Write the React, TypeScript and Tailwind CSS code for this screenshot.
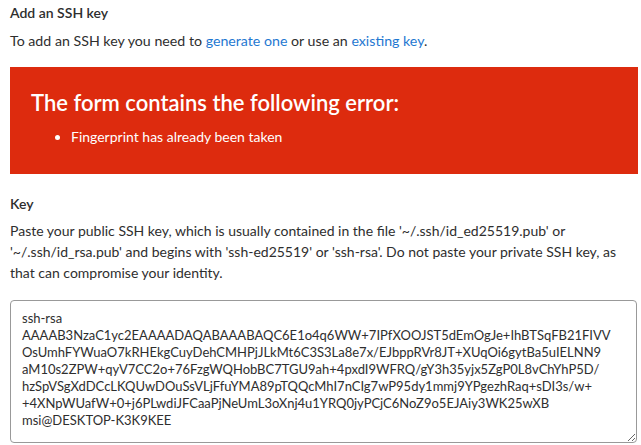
import React from 'react'

const keyText = [
  'ssh-rsa',
  'AAAAB3NzaC1yc2EAAAADAQABAAABAQC6E1o4q6WW+7IPfXOOJST5dEmOgJe+IhBTSqFB21FIVV',
  'OsUmhFYWuaO7kRHEkgCuyDehCMHPjJLkMt6C3S3La8e7x/EJbppRVr8JT+XUqOi6gytBa5uIELNN9',
  'aM10s2ZPW+qyV7CC2o+76FzgWQHobBC7TGU9ah+4pxdI9WFRQ/gY3h35yjx5ZgP0L8vChYhP5D/',
  'hzSpVSgXdDCcLKQUwDOuSsVLjFfuYMA89pTQQcMhI7nCIg7wP95dy1mmj9YPgezhRaq+sDI3s/w+',
  '+4XNpWUafW+0+j6PLwdiJFCaaPjNeUmL3oXnj4u1YRQ0jyPCjC6NoZ9o5EJAiy3WK25wXB',
  'msi@DESKTOP-K3K9KEE',
].join('\n')

const App: React.FC = () => {
  return (
    <div className="w-[641px] h-[445px] overflow-hidden bg-white text-[#2e2e2e] font-['Lato',sans-serif] px-[10px] pt-[3px]">
      <h4 className="text-[14px] leading-5 font-semibold">Add an SSH key</h4>
      <p className="mt-2 text-[14.2px] leading-5">
        To add an SSH key you need to{' '}
        <a href="#" className="text-[#1f78d1]">generate one</a> or use an{' '}
        <a href="#" className="text-[#1f78d1]">existing key</a>.
      </p>

      <div className="mt-4 w-[628px] h-[107px] bg-[#dd2b0e] text-white pl-[21px] pt-[22px]">
        <h4 className="text-[22px] leading-7 font-semibold">The form contains the following error:</h4>
        <ul className="mt-[10px] pl-[40px] list-disc text-[14px] leading-5">
          <li>Fingerprint has already been taken</li>
        </ul>
      </div>

      <div className="mt-5">
        <label className="block text-[14px] leading-5 font-semibold">Key</label>
        <p className="mt-[6px] text-[14px] leading-[21px]">
          Paste your public SSH key, which is usually contained in the file '~/.ssh/id_ed25519.pub' or
          '~/.ssh/id_rsa.pub' and begins with 'ssh-ed25519' or 'ssh-rsa'. Do not paste your private SSH key, as
          that can compromise your identity.
        </p>
        <textarea
          className="mt-[17px] block w-[627px] h-[143px] border border-[#999] rounded-[4px] pl-[11px] pt-[9px] text-[13px] leading-[17px] whitespace-pre overflow-hidden font-['Lato',sans-serif] text-[#2e2e2e] outline-none"
          defaultValue={keyText}
        />
      </div>
    </div>
  )
}

export default App
